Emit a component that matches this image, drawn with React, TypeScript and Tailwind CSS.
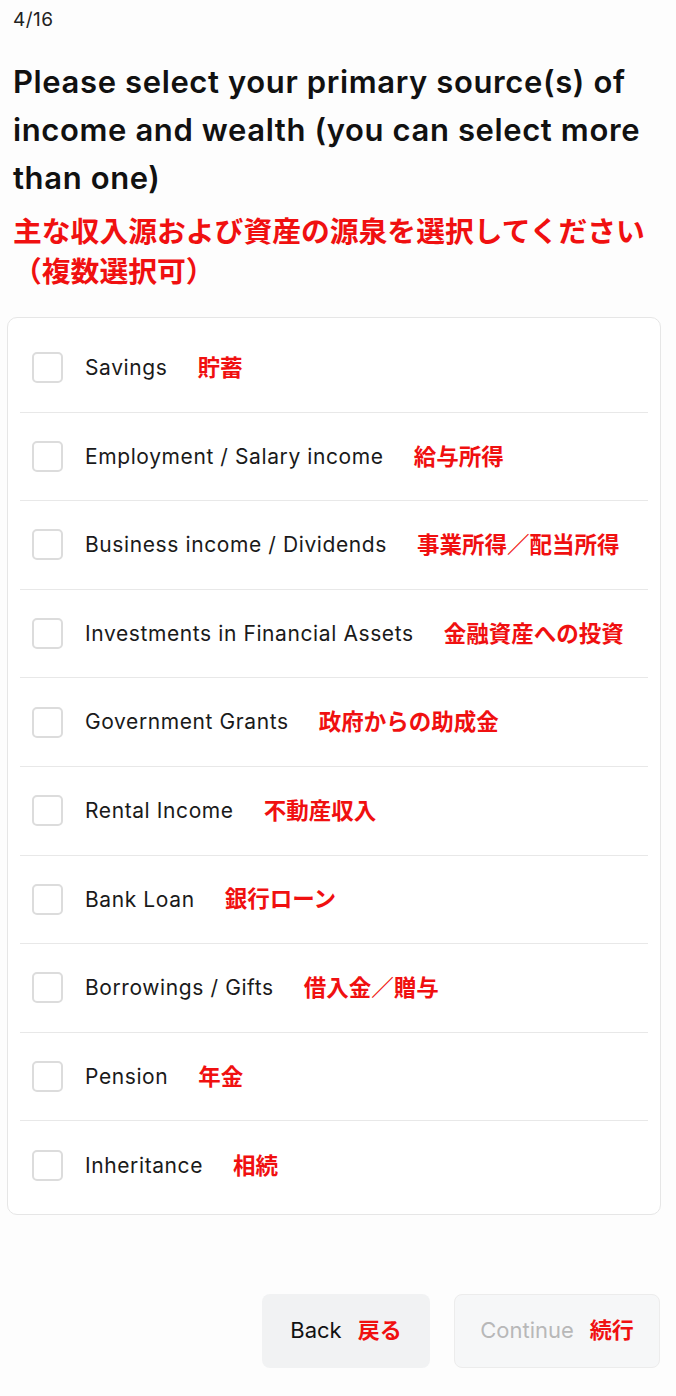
import { useState } from 'react';

const options = [
  { en: 'Savings', ja: '貯蓄' },
  { en: 'Employment / Salary income', ja: '給与所得' },
  { en: 'Business income / Dividends', ja: '事業所得／配当所得' },
  { en: 'Investments in Financial Assets', ja: '金融資産への投資' },
  { en: 'Government Grants', ja: '政府からの助成金' },
  { en: 'Rental Income', ja: '不動産収入' },
  { en: 'Bank Loan', ja: '銀行ローン' },
  { en: 'Borrowings / Gifts', ja: '借入金／贈与' },
  { en: 'Pension', ja: '年金' },
  { en: 'Inheritance', ja: '相続' },
];

const font = { fontFamily: 'Inter, "Noto Sans CJK JP", sans-serif' };

export default function App() {
  const [checked, setChecked] = useState<string[]>([]);

  const toggle = (key: string) =>
    setChecked((prev) => (prev.includes(key) ? prev.filter((k) => k !== key) : [...prev, key]));

  return (
    <div className="min-h-screen w-[676px] bg-[#fdfdfd] text-[#111]" style={font}>
      <div className="px-[13px] pt-[6px]">
        <p className="text-[19px] leading-[28px] tracking-[0.5px] text-[#222]">4/16</p>
        <h1 className="mt-[24px] w-[650px] text-[31px] leading-[48px] font-semibold tracking-[0.02em] text-[#111]">
          Please select your primary source(s) of income and wealth (you can select more than one)
        </h1>
        <p className="mt-[10px] text-[28.8px] leading-[40px] font-bold text-[#f01010]">
          主な収入源および資産の源泉を選択してください
          <br />
          （複数選択可）
        </p>
      </div>

      <div className="ml-[7px] mr-[15px] mt-[25px] rounded-[10px] border border-[#e6e6e6] bg-white px-3 pt-[6px] pb-[4px]">
        {options.map((o, i) => (
          <label
            key={o.en}
            className={`flex h-[88.6px] cursor-pointer items-center px-3 ${i < options.length - 1 ? 'border-b border-[#e8e8e8]' : ''}`}
          >
            <input
              type="checkbox"
              className="sr-only"
              checked={checked.includes(o.en)}
              onChange={() => toggle(o.en)}
            />
            <span
              className={`h-[31px] w-[31px] shrink-0 rounded-[5px] border-2 ${checked.includes(o.en) ? 'border-[#111] bg-[#111]' : 'border-[#dcdcdc] bg-white'}`}
            />
            <span className="ml-[22px] text-[21px] tracking-[0.6px] text-[#1a1a1a]">{o.en}</span>
            <span className="ml-[30px] text-[22.5px] font-bold text-[#f01010]">{o.ja}</span>
          </label>
        ))}
      </div>

      <div className="mt-[79px] flex justify-end gap-6 pr-4">
        <button className="flex h-[74px] w-[168px] items-center justify-center gap-4 rounded-lg bg-[#f1f2f3] text-[22px]">
          <span className="text-[#111]">Back</span>
          <span className="font-bold text-[#f01010]">戻る</span>
        </button>
        <button
          disabled
          className="flex h-[74px] w-[206px] items-center justify-center gap-4 rounded-lg border border-[#ececec] bg-[#f6f7f8] text-[22px]"
        >
          <span className="text-[#b8b8b8]">Continue</span>
          <span className="font-bold text-[#f01010]">続行</span>
        </button>
      </div>
    </div>
  );
}
